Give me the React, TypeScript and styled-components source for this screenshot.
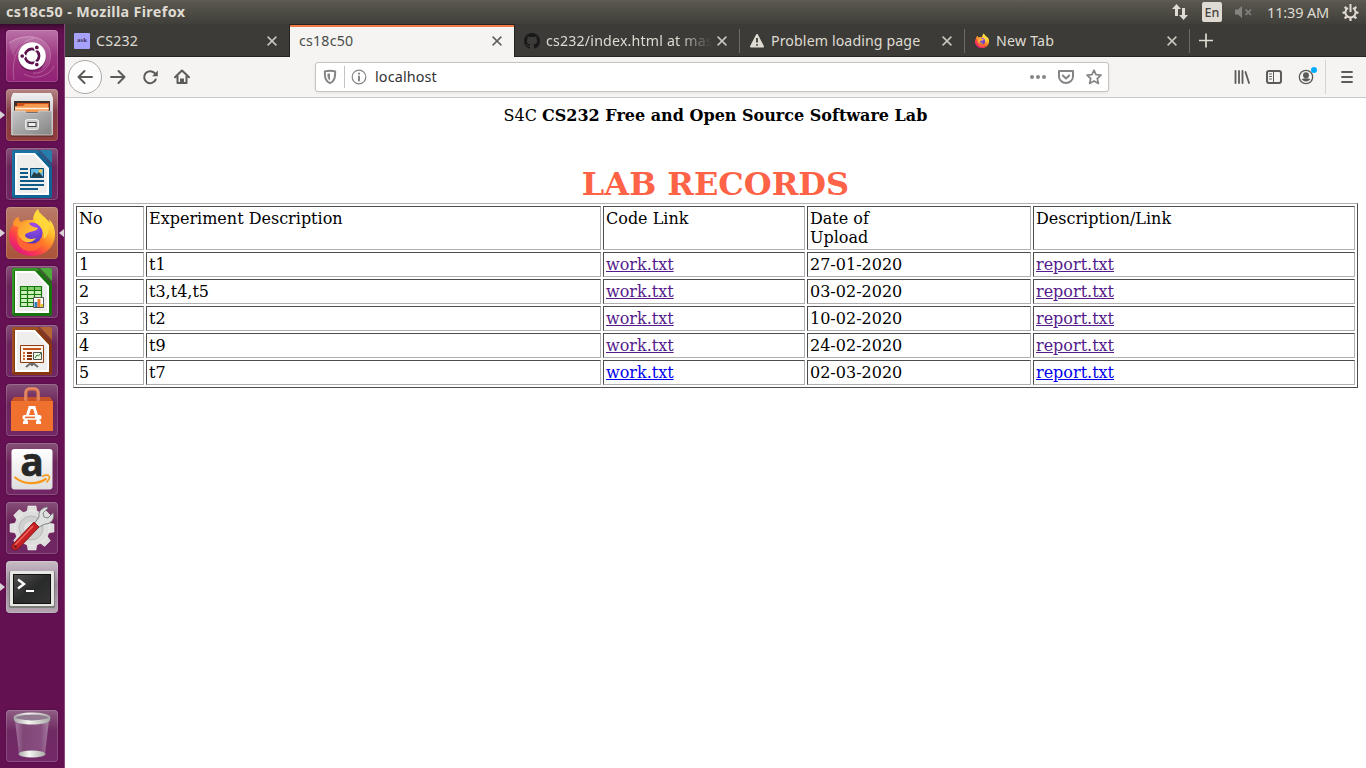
import React from "react";
import styled, { createGlobalStyle, css } from "styled-components";

const GlobalStyle = createGlobalStyle`
  html, body { margin: 0; padding: 0; background: #fff; overflow: hidden; }
  * { box-sizing: border-box; }
  svg { display: block; flex: none; overflow: visible; }
`;

const uiFont = `"Noto Sans", "Open Sans", sans-serif`;

const Desktop = styled.div`
  width: 1366px;
  height: 768px;
  display: flex;
  flex-direction: column;
  font-family: ${uiFont};
`;

const MenuBar = styled.header`
  height: 24px;
  flex: none;
  display: flex;
  align-items: center;
  justify-content: space-between;
  padding: 0 7px 0 6px;
  background: linear-gradient(#5f5d53 0, #57554c 3px, #403f3a 100%);
  color: #dfdbd2;
`;

const WindowTitle = styled.span`
  font-size: 14.3px;
  font-weight: 700;
  line-height: 24px;
  letter-spacing: 0.36px;
  white-space: nowrap;
`;

const Indicators = styled.div`
  display: flex;
  align-items: center;
`;

const Language = styled.span`
  width: 20px;
  height: 20px;
  margin-left: 13px;
  border-radius: 2px;
  background: #dfdbd2;
  color: #45443f;
  font-size: 12.5px;
  font-weight: 500;
  line-height: 21px;
  text-align: center;
`;

const VolumeSlot = styled.span`
  margin-left: 12px;
`;

const Clock = styled.span`
  width: 63px;
  margin: 0 12px 0 14px;
  font-size: 14.5px;
  line-height: 24px;
  letter-spacing: -0.15px;
  white-space: nowrap;
`;

const Workspace = styled.div`
  flex: 1;
  min-height: 0;
  display: flex;
`;

const Launcher = styled.nav`
  width: 65px;
  flex: none;
  display: flex;
  flex-direction: column;
  gap: 7px;
  padding: 6px 0 6px 6px;
  border-right: 1px solid #84487a;
  background: linear-gradient(#380a2e 0, #5d0d4b 6px, #651053 12px, #641152 100%);
`;

const Tile = styled.div<{ $fill: string; $last?: boolean }>`
  position: relative;
  width: 52px;
  height: 52px;
  flex: none;
  border-radius: 4px;
  background: ${(p) => p.$fill};
  box-shadow: inset 0 0 0 1px rgba(255, 255, 255, 0.17), 0 0 2px rgba(30, 0, 25, 0.45);
  ${(p) => p.$last && css`margin-top: auto;`}
`;

const Marker = styled.i<{ $right?: boolean }>`
  position: absolute;
  top: 22px;
  width: 0;
  height: 0;
  border: 4px solid transparent;
  ${(p) =>
    p.$right
      ? css`right: -6px; border-right: 5px solid #d9d3d8; border-left: 0;`
      : css`left: -6px; border-left: 5px solid #d9d3d8; border-right: 0;`}
`;

const Browser = styled.main`
  flex: 1;
  min-width: 0;
  display: flex;
  flex-direction: column;
  background: #fff;
`;

const TabStrip = styled.div`
  height: 33px;
  flex: none;
  display: flex;
  background: #3c3b37;
  box-shadow: inset 0 -1px #252420;
`;

const TabBox = styled.div<{ $active?: boolean; $divider?: boolean }>`
  position: relative;
  width: 225px;
  height: 33px;
  display: flex;
  align-items: center;
  padding: 1px 13px 0 9px;
  color: ${(p) => (p.$active ? "#4c4c4c" : "#dfdbd2")};
  ${(p) =>
    p.$active &&
    css`
      background: linear-gradient(#252420 0 1px, #f07746 1px 3px, #f5f4f2 3px);
      box-shadow: inset -1px 0 #252420, -1px 0 #252420;
    `}
  ${(p) =>
    p.$divider &&
    css`
      &::after {
        content: "";
        position: absolute;
        right: 0;
        top: 5px;
        width: 1px;
        height: 24px;
        background: #6b6a66;
      }
    `}
`;

const TabIcon = styled.span`
  width: 16px;
  height: 16px;
  margin-right: 6px;
  flex: none;
`;

const AskIcon = styled(TabIcon)`
  border-radius: 1px;
  background: #a6a2fa;
  color: #44335d;
  font: 700 7px/15px "Liberation Serif", serif;
  text-align: center;
`;

const TabTitle = styled.span<{ $spacing: number; $fade?: boolean }>`
  flex: 1;
  min-width: 0;
  overflow: hidden;
  font-size: 14.2px;
  line-height: 20px;
  letter-spacing: ${(p) => p.$spacing}px;
  white-space: nowrap;
  ${(p) => p.$fade && css`mask-image: linear-gradient(90deg, #000 132px, transparent 166px);`}
`;

const NewTab = styled.div`
  padding: 9px 0 0 9px;
`;

const Toolbar = styled.div`
  height: 41px;
  flex: none;
  display: flex;
  align-items: center;
  padding: 0 11px 0 3px;
  background: #f5f4f2;
  border-bottom: 1px solid #cbc9c7;
  color: #5b5b58;
`;

const BackButton = styled.span`
  width: 34px;
  height: 34px;
  display: grid;
  place-items: center;
  border: 1px solid #aaa9a7;
  border-radius: 50%;
  background: #fdfdfd;
`;

const NavIcons = styled.div`
  display: flex;
  gap: 16px;
  margin-left: 8px;
`;

const AddressBar = styled.div`
  width: 794px;
  height: 30px;
  margin-left: 125px;
  display: flex;
  align-items: center;
  padding: 0 6px;
  border: 1px solid #c5c2c0;
  border-radius: 3px;
  background: #fff;
  box-shadow: 0 1px 3px rgba(0, 0, 0, 0.07);
  color: #858583;
`;

const AddressDivider = styled.i`
  width: 1px;
  height: 22px;
  margin: 0 6px 0 6px;
  background: #c6c4c2;
`;

const Url = styled.span`
  flex: 1;
  padding-left: 8px;
  color: #333;
  font-size: 14.4px;
  line-height: 20px;
  letter-spacing: 0.12px;
`;

const AddressActions = styled.div`
  display: flex;
  gap: 12px;
`;

const ToolIcons = styled.div`
  display: flex;
  align-items: center;
  gap: 16px;
  margin-left: auto;
`;

const ToolDivider = styled.i`
  width: 1px;
  height: 34px;
  margin: 0 13px 0 7px;
  background: #d6d4d2;
`;

const Page = styled.article`
  flex: 1;
  padding: 8px;
  color: #000;
  font: 16px/19px "DejaVu Serif", serif;
`;

const CourseName = styled.p`
  margin: 0;
  text-align: center;
`;

const Heading = styled.h1`
  margin: 40px 0 0;
  color: tomato;
  font-size: 32px;
  line-height: 38px;
  text-align: center;
`;

const Records = styled.table`
  width: 1285px;
  table-layout: fixed;
  border: 1px solid;
  border-color: #b0b0b0 #4c4c4c #4c4c4c #b0b0b0;
  border-collapse: separate;
  border-spacing: 2px;
`;

const Col = styled.col<{ $w: number }>`
  width: ${(p) => p.$w}px;
`;

const Cell = styled.td`
  padding: 2px;
  vertical-align: top;
  border: 1px solid;
  border-color: #4c4c4c #b0b0b0 #b0b0b0 #4c4c4c;
`;

const FileLink = styled.a<{ $visited: boolean }>`
  color: ${(p) => (p.$visited ? "#551a8b" : "#0000ee")};
  text-decoration: underline;
`;

const Svg = ({ s = 16, children }: { s?: number; children: React.ReactNode }) => (
  <svg width={s} height={s} viewBox={`0 0 ${s} ${s}`} fill="none" stroke="currentColor" strokeWidth="2" strokeLinecap="round" strokeLinejoin="round">
    {children}
  </svg>
);

const CloseIcon = () => (
  <svg width="10" height="10" viewBox="0 0 10 10" stroke="currentColor" strokeWidth="1.5" opacity=".88">
    <path d="M.6.6l8.8 8.8M9.4.6L.6 9.4" />
  </svg>
);

const FirefoxLogo = ({ size }: { size: number }) => (
  <svg width={size} height={size} viewBox="0 0 52 52">
    <defs>
      <linearGradient id="fxBody" x1=".85" y1=".1" x2=".25" y2=".95">
        <stop offset="0" stopColor="#fff04a" />
        <stop offset=".3" stopColor="#ffbd2f" />
        <stop offset=".55" stopColor="#ff7a2a" />
        <stop offset=".78" stopColor="#fc3a4e" />
        <stop offset="1" stopColor="#e21a7c" />
      </linearGradient>
      <radialGradient id="fxGlobe" cx=".6" cy=".15" r=".95">
        <stop offset="0" stopColor="#a04cf0" />
        <stop offset=".55" stopColor="#7140d2" />
        <stop offset="1" stopColor="#4a36ac" />
      </radialGradient>
      <linearGradient id="fxTail" x1="0" y1="0" x2="1" y2=".6">
        <stop offset="0" stopColor="#ff8a2b" />
        <stop offset="1" stopColor="#ffc93a" />
      </linearGradient>
    </defs>
    <path fill="url(#fxBody)" d="M32 2c-3 3-5 7-5 11-5 0-9 0-12 2-2-1-3-3-2-5-4 2-6 6-6 8-3 3-4 8-4 12 1 11 11 19 23 19 14 0 23-10 23-22 0-7-3-12-6-15l1 4C41 11 33 9 32 2z" />
    <circle cx="26" cy="26" r="10.500" fill="url(#fxGlobe)" />
    <path fill="#ffd83c" d="M32 2c-5 5-6 10-1 15 7 5 8 11 5 17 7-5 9-14 5-21C38 8 33 7 32 2z" opacity=".85" />
    <path fill="url(#fxTail)" d="M7 18c0-4 2-7 6-8-1 3 0 4 2 6 3-1 6-1 8-1 0 3 3 5 9 6-1 3-5 3-8 4-2 1-5 1-5 4 2 3 6 4 11 2-3 5-11 6-15 1-4-4-4-8-2-12z" />
    <path fill="#ff7528" d="M12 22c-1 10 6 16 15 15 5 0 9-3 11-8 1 9-6 15-14 15C14 44 8 34 12 22z" opacity=".75" />
  </svg>
);

const UbuntuIcon = () => (
  <svg width="52" height="52" viewBox="0 0 52 52">
    <g fill="none" stroke="#fff" opacity=".25">
      <path d="M3 13C15 5 35 3 43 18c5 12-3 27-16 25" />
      <path d="M8 50C5 31 11 12 28 8" />
      <path d="M18 44c12 7 26 1 30-8" />
    </g>
    <path d="M3 12C18 2 40 4 44 22c1 9-3 15-8 18 4-14 0-26-12-28-8-1-15 4-16 15C5 22 4 16 3 12z" fill="#fff" opacity=".13" />
    <circle cx="26" cy="27.500" r="14" fill="#4b0b3c" opacity=".45" />
    <circle cx="26" cy="26" r="13.800" fill="#fff" />
    <circle cx="26" cy="26" r="7" fill="none" stroke="#5e114e" strokeWidth="2.800" />
    <g stroke="#fff" strokeWidth="1.300">
      <path d="M26 26l4.600-8M26 26l4.600 8M26 26h-9" />
      <circle cx="16.200" cy="26" r="2.500" fill="#5e114e" />
      <circle cx="30.800" cy="17.400" r="2.500" fill="#5e114e" />
      <circle cx="30.800" cy="34.600" r="2.500" fill="#5e114e" />
    </g>
    <circle cx="26" cy="26" r="5.400" fill="#fff" />
  </svg>
);

const FilesIcon = () => (
  <svg width="52" height="52" viewBox="0 0 52 52">
    <defs>
      <linearGradient id="drawer" x2="1" y2="1"><stop stopColor="#c6c6c6" /><stop offset="1" stopColor="#838383" /></linearGradient>
      <linearGradient id="cabinet" x2="0" y2="1"><stop stopColor="#f0f0f0" /><stop offset="1" stopColor="#a5a5a5" /></linearGradient>
    </defs>
    <path d="M5 45h42v3H5z" fill="#37251f" opacity=".45" />
    <path d="M7 4h38l2 5v37H5V9z" fill="url(#cabinet)" />
    <path d="M8 12h36v13H8z" fill="#3e302c" />
    <path d="M11 14h32v9H11z" fill="#d35219" />
    <path d="M9 17h8l2-2h23v8H9z" fill="#f49a50" />
    <path d="M9 19.500h34" stroke="#fff0dc" strokeWidth="1.500" />
    <path d="M6 22h13l1 2h12l1-2h13v24H6z" fill="url(#drawer)" stroke="#ddd" strokeWidth=".7" />
    <rect x="19.500" y="30.500" width="13" height="10" rx="2" fill="#ccc" stroke="#eee" />
    <rect x="22" y="33.500" width="8" height="4" fill="#eee" stroke="#444" />
  </svg>
);

const OfficeDocument = ({ dark, light, children }: { dark: string; light: string; children: React.ReactNode }) => (
  <svg width="52" height="52" viewBox="0 0 52 52">
    <path d="M8 2h23l15 17v29q0 2-2 2H8q-2 0-2-2V4q0-2 2-2z" fill={dark} />
    <path d="M8 2h23l3 3H8v42l-2 1V4q0-2 2-2z" fill={light} opacity=".55" />
    <path d="M31 2h13q2 0 2 2v15z" fill={dark} opacity=".65" />
    <path d="M34 2h10q2 0 2 2v11z" fill={light} />
    <path d="M9 5h20l14 15v27H9z" fill="#fff" />
    <path d="M11 7h17l13 14v24H11z" fill="#eeeeed" />
    {children}
  </svg>
);

const WriterIcon = () => (
  <OfficeDocument dark="#0e6493" light="#277eab">
    <path d="M14 21h8M14 25h8M14 29h8M14 33h24M14 37h24M14 41h18" stroke="#115986" strokeWidth="2" />
    <path d="M24.500 20.500h13v9h-13z" fill="#67b9e4" stroke="#0b4970" />
    <path d="M25 29l3-5 3 2 2-2 4 5z" fill="#253d44" />
    <circle cx="34.500" cy="23" r="1.800" fill="#f3c73d" />
  </OfficeDocument>
);

const CalcIcon = () => (
  <OfficeDocument dark="#18750d" light="#4cab3b">
    <path d="M14 20h22v21H14z" fill="#cdf2bb" />
    <path d="M14 20h22v5H14z" fill="#86cf70" />
    <path d="M14.500 20.500h21v20h-21zM14 24.500h22M14 28.500h22M14 32.500h22M14 36.500h22M21.500 20v21M28.500 20v21" fill="none" stroke="#19760d" strokeWidth="1.200" />
    <path d="M27.500 31.500h10v10h-10z" fill="#fff" stroke="#555" />
    <path d="M28.500 36h3v5h-3z" fill="#297fbd" /><path d="M31.500 33h3v8h-3z" fill="#ed7b26" /><path d="M34.500 38h2.500v3h-2.500z" fill="#e8c62c" />
  </OfficeDocument>
);

const ImpressIcon = () => (
  <OfficeDocument dark="#86370e" light="#b56634">
    <path d="M14.500 20.500h23v17h-23z" fill="#fff7ef" stroke="#913b11" />
    <path d="M17 24h18" stroke="#c7541b" strokeWidth="2" />
    <path d="M17 28h2M17 31h2M17 34h2" stroke="#d4692f" strokeWidth="2" />
    <path d="M21 28h5M21 31h5M21 34h5" stroke="#83340d" strokeWidth="2" />
    <path d="M27.500 27.500h8v7h-8z" fill="#eef7e6" stroke="#50554d" />
    <path d="M29 33l2-3 1.500 1L35 28" fill="none" stroke="#30832e" />
    <path d="M26 38v3M25 38l-5 4M27 38l5 4" stroke="#6b6b6b" strokeWidth="2" />
  </OfficeDocument>
);

const SoftwareIcon = () => (
  <svg width="52" height="52" viewBox="0 0 52 52">
    <path d="M7 14h38l2 33H5z" fill="#eb692d" />
    <path d="M8 13h36l3 5H5z" fill="#c65427" />
    <path d="M5 17h42v30H5z" fill="#f0712e" />
    <path d="M20 17V9q0-4 4-4h4q4 0 4 4v8" fill="none" stroke="#df7b50" strokeWidth="3" />
    <path d="M19 16V9q0-5 5-5h4q5 0 5 5v7" fill="none" stroke="#f2a37b" strokeWidth=".8" />
    <path d="M24 23l-5 16M28 23l5 16M22.500 23.500h7M17 38.500h5M30 38.500h5" stroke="#fff" strokeWidth="2.800" fill="none" />
    <rect x="16.500" y="31" width="19" height="4.800" rx="2" fill="#fff" />
    <path d="M19 33.400h10" stroke="#ec692c" strokeWidth="1.600" />
  </svg>
);

const AmazonIcon = () => (
  <svg width="52" height="52" viewBox="0 0 52 52">
    <defs><linearGradient id="paper" x2="0" y2="1"><stop stopColor="#fff" /><stop offset="1" stopColor="#dedede" /></linearGradient></defs>
    <rect x="5.500" y="6" width="41" height="40.500" rx="3" fill="url(#paper)" />
    <text x="26" y="33" textAnchor="middle" fontFamily="Open Sans, sans-serif" fontSize="39" fontWeight="700" fill="#272727" stroke="#272727" strokeWidth=".6">a</text>
    <path d="M8.500 34c9 8 23 8 32 1.500" fill="none" stroke="#f69a1d" strokeWidth="2.200" />
    <path d="M36 33.500c3-1.500 6-1.500 7-.5s-.3 4-2.500 6.500" fill="none" stroke="#f69a1d" strokeWidth="1.600" />
  </svg>
);

const SettingsIcon = () => (
  <svg width="52" height="52" viewBox="0 0 52 52">
    <g fill="#dededd" stroke="#fafafa" strokeWidth=".5">
      {[0, 45, 90, 135, 180, 225, 270, 315].map((a) => (
        <path key={a} d="M21 10l1-6h8l1 6z" transform={`rotate(${a} 26 26)`} />
      ))}
      <circle cx="26" cy="26" r="17.500" />
    </g>
    <circle cx="25" cy="26" r="12" fill="#d0d0d0" stroke="#b8b8b8" />
    <circle cx="24" cy="26" r="6" fill="#e1e1e1" />
    <path d="M31 26l-3-4 5-7c-1-6 3-9 8-10l1 1-5 5 1 4 4 1 5-5c2 6-2 11-8 11z" fill="#dedfdf" stroke="#818383" />
    <path d="M28 20l5 5-21 22c-5 3-8-2-5-5z" fill="#c82024" stroke="#871918" />
    <path d="M27 24L9 43" stroke="#ef6860" strokeWidth="1.500" />
    <circle cx="9.500" cy="44.500" r="1.500" fill="#762020" />
  </svg>
);

const TerminalIcon = () => (
  <svg width="52" height="52" viewBox="0 0 52 52">
    <defs><linearGradient id="screen" x2="1" y2="1"><stop stopColor="#50514f" /><stop offset=".5" stopColor="#292a2a" /><stop offset="1" stopColor="#343534" /></linearGradient></defs>
    <rect x="3" y="10" width="46" height="37" rx="1.500" fill="#7c7c7a" />
    <rect x="4" y="10" width="44" height="35" rx="1" fill="#e7e7e4" />
    <path d="M7 13h38v30H7z" fill="#111" />
    <path d="M8 14h36v28H8z" fill="url(#screen)" />
    <path d="M12 18.500l6 4.500-6 4.500" fill="none" stroke="#fff" strokeWidth="2.400" /><path d="M20 30h8" stroke="#fff" strokeWidth="2" />
  </svg>
);

const TrashIcon = () => (
  <svg width="52" height="52" viewBox="0 0 52 52">
    <defs>
      <linearGradient id="glass"><stop stopColor="#b48bb0" /><stop offset=".25" stopColor="#84507c" /><stop offset=".75" stopColor="#8e5a87" /><stop offset="1" stopColor="#b795b5" /></linearGradient>
      <linearGradient id="rim"><stop stopColor="#aaa" /><stop offset=".4" stopColor="#f5f5f3" /><stop offset="1" stopColor="#a9aaa7" /></linearGradient>
    </defs>
    <path d="M9 10l4 34q13 5 26 0l4-34z" fill="url(#glass)" opacity=".75" />
    <ellipse cx="26" cy="44" rx="13.500" ry="3.500" fill="url(#rim)" />
    <ellipse cx="26" cy="7.500" rx="17.500" ry="4" fill="#927b90" stroke="url(#rim)" strokeWidth="2" />
    <path d="M8 8v2c1 6 35 6 36 0V8c-3 5-33 5-36 0z" fill="url(#rim)" />
  </svg>
);

const purpleTile = "linear-gradient(#865078, #6c245b 38%, #702764)";
const apps = [
  { name: "dash", icon: <UbuntuIcon />, fill: "linear-gradient(#bb72a8, #9c357f 50%, #922176)" },
  { name: "files", icon: <FilesIcon />, fill: "linear-gradient(#b68683, #823a46 45%, #933c3c)", left: true },
  { name: "writer", icon: <WriterIcon />, fill: purpleTile },
  { name: "firefox", icon: <FirefoxLogo size={52} />, fill: "linear-gradient(#b97b68, #aa5238)", left: true, right: true },
  { name: "calc", icon: <CalcIcon />, fill: purpleTile },
  { name: "impress", icon: <ImpressIcon />, fill: purpleTile },
  { name: "software", icon: <SoftwareIcon />, fill: purpleTile },
  { name: "amazon", icon: <AmazonIcon />, fill: purpleTile },
  { name: "settings", icon: <SettingsIcon />, fill: purpleTile },
  { name: "terminal", icon: <TerminalIcon />, fill: "linear-gradient(#c9bdc7, #9b8798 45%, #b4a5b0)", left: true },
  { name: "trash", icon: <TrashIcon />, fill: "linear-gradient(#8f5e84, #6f2a62 40%, #74296a)", last: true },
];

const githubMark = "M8 0C3.58 0 0 3.58 0 8c0 3.54 2.29 6.53 5.47 7.59.4.07.55-.17.55-.38 0-.19-.01-.82-.01-1.49-2.01.37-2.53-.49-2.69-.94-.09-.23-.48-.94-.82-1.13-.28-.15-.68-.52-.01-.53.63-.01 1.08.58 1.23.82.72 1.21 1.87.87 2.33.66.07-.52.28-.87.51-1.07-1.78-.2-3.64-.89-3.64-3.95 0-.87.31-1.59.82-2.15-.08-.2-.36-1.02.08-2.12 0 0 .67-.21 2.2.82a7.65 7.65 0 0 1 4 0c1.53-1.04 2.2-.82 2.2-.82.44 1.1.16 1.92.08 2.12.51.56.82 1.27.82 2.15 0 3.07-1.87 3.75-3.65 3.95.29.25.54.73.54 1.48 0 1.07-.01 1.93-.01 2.2 0 .21.15.46.55.38A8.01 8.01 0 0 0 16 8c0-4.42-3.58-8-8-8z";

const tabs = [
  { title: "CS232", spacing: 0.2, icon: <AskIcon>ask</AskIcon> },
  { title: "cs18c50", spacing: 0.2, active: true },
  { title: "cs232/index.html at master", spacing: 0.18, fade: true, divider: true, icon: <TabIcon><svg width="16" height="16" viewBox="0 0 16 16"><path fill="#191919" d={githubMark} /></svg></TabIcon> },
  { title: "Problem loading page", spacing: 0.1, divider: true, icon: <TabIcon><svg width="16" height="16" viewBox="0 0 16 16"><path d="M8 2l6 11.500H2z" fill="#dfdbd2" stroke="#dfdbd2" strokeWidth="2" strokeLinejoin="round" /><path d="M8 5v4.500M8 11.200v1.600" stroke="#3c3b37" strokeWidth="1.800" /></svg></TabIcon> },
  { title: "New Tab", spacing: 0.2, divider: true, icon: <TabIcon><FirefoxLogo size={16} /></TabIcon> },
];

const records = [
  ["1", "t1", "27-01-2020"],
  ["2", "t3,t4,t5", "03-02-2020"],
  ["3", "t2", "10-02-2020"],
  ["4", "t9", "24-02-2020"],
  ["5", "t7", "02-03-2020"],
];

export default function App() {
  return (
    <Desktop>
      <GlobalStyle />
      <MenuBar>
        <WindowTitle>cs18c50 - Mozilla Firefox</WindowTitle>
        <Indicators>
          <svg width="18" height="18" viewBox="0 0 18 18" fill="#dfdbd2">
            <path d="M5.500 1L10 6H7v7H4V6H1zM12.500 17L8 12h3V5h3v7h3z" />
          </svg>
          <Language>En</Language>
          <VolumeSlot>
            <svg width="19" height="14" viewBox="0 0 19 14">
              <path d="M1 4.500h3L8 1v12L4 9.500H1z" fill="#85837d" />
              <path d="M11.500 4.500l5.500 5.500M17 4.500L11.500 10" stroke="#85837d" strokeWidth="1.600" />
            </svg>
          </VolumeSlot>
          <Clock>11:39 AM</Clock>
          <svg width="17" height="17" viewBox="0 0 17 17" fill="none" stroke="#dfdbd2">
            <path d="M6 4a5.100 5.100 0 1 0 5 0" strokeWidth="2" />
            <path d="M8.500 0v8" strokeWidth="2" />
            <path d="M3.400 8.700H.5M16.500 8.700h-2.900M4.800 5L2.700 2.900M12.200 5l2.100-2.100M4.800 12.400l-2.100 2.100M12.200 12.400l2.100 2.100M8.500 14v3" strokeWidth="2.200" />
          </svg>
        </Indicators>
      </MenuBar>
      <Workspace>
        <Launcher>
          {apps.map((a) => (
            <Tile key={a.name} $fill={a.fill} $last={a.last}>
              {a.icon}
              {a.left && <Marker />}
              {a.right && <Marker $right />}
            </Tile>
          ))}
        </Launcher>
        <Browser>
          <TabStrip>
            {tabs.map((t) => (
              <TabBox key={t.title} $active={t.active} $divider={t.divider}>
                {t.icon}
                <TabTitle $spacing={t.spacing} $fade={t.fade}>{t.title}</TabTitle>
                <CloseIcon />
              </TabBox>
            ))}
            <NewTab>
              <svg width="15" height="15" viewBox="0 0 15 15" stroke="#dfdbd2" strokeWidth="1.700"><path d="M7 .5v14M0 7.500h14" /></svg>
            </NewTab>
          </TabStrip>
          <Toolbar>
            <BackButton><Svg><path d="M15 8H1.500M7.500 2l-6 6 6 6" /></Svg></BackButton>
            <NavIcons>
              <Svg><path d="M1 8h13.500M8.500 2l6 6-6 6" /></Svg>
              <Svg><path d="M13.700 10.500A6 6 0 1 1 12.500 4l1.600 1.700" /><path d="M15.800 1.500v5.700h-5.700z" fill="currentColor" stroke="none" /></Svg>
              <Svg><path d="M1 8.300L8 1.500l7 6.800M3.500 7.500V14h9V7.500" /><path d="M6 14V9.500h4V14z" fill="currentColor" stroke="none" /></Svg>
            </NavIcons>
            <AddressBar>
              <Svg><path d="M8 1.800c2 0 3.800.2 5.200.6 0 5.600-.4 9.700-5.200 11.800C3.200 12.100 2.800 8 2.800 2.400 4.200 2 6 1.800 8 1.800z" /><path d="M8 4.500v7C6 10.200 5.400 8.300 5.400 4.700z" fill="currentColor" stroke="none" /></Svg>
              <AddressDivider />
              <Svg><circle cx="8" cy="8" r="6.800" strokeWidth="1.200" /><path d="M8 7.500v4" /><path d="M8 4.600v.1" /></Svg>
              <Url>localhost</Url>
              <AddressActions>
                <Svg><g fill="currentColor" stroke="none"><circle cx="2" cy="8" r="2" /><circle cx="8" cy="8" r="2" /><circle cx="14" cy="8" r="2" /></g></Svg>
                <Svg><path d="M1 2h14v5.500a7 6.500 0 0 1-14 0z" /><path d="M4.800 6.500L8 9.500l3.200-3" /></Svg>
                <Svg><path d="M8 1.200l2 4.500 5 .5-3.700 3.300 1.100 4.900L8 11.900l-4.400 2.500 1.100-4.900L1 6.200l5-.5z" strokeWidth="1.700" /></Svg>
              </AddressActions>
            </AddressBar>
            <ToolIcons>
              <Svg><path d="M1.500 2v12M5 2v12M8.500 2v12M11.500 3L15 14" strokeWidth="1.800" /></Svg>
              <Svg><rect x="1" y="2" width="14" height="12" rx="2" /><path d="M7.500 2v12" strokeWidth="1" /><path d="M3.500 5h2M3.500 7.500h2M3.500 10h2" strokeWidth="1" /></Svg>
              <svg width="20" height="20" viewBox="0 0 20 20">
                <circle cx="8" cy="10" r="6.700" fill="none" stroke="#5b5b58" strokeWidth="1.300" />
                <circle cx="8" cy="8.200" r="3" fill="#5b5b58" /><path d="M3.500 12q4.500-1.500 9 0-4.500 5-9 0z" fill="#5b5b58" />
                <circle cx="16" cy="3" r="3" fill="#00adff" />
              </svg>
            </ToolIcons>
            <ToolDivider />
            <Svg><path d="M3 3h10M3 8h10M3 13h10" strokeWidth="1.800" /></Svg>
          </Toolbar>
          <Page>
            <CourseName>S4C <b>CS232 Free and Open Source Software Lab</b></CourseName>
            <Heading>LAB RECORDS</Heading>
            <Records>
              <colgroup>{[68, 455, 202, 224, 322].map((w) => <Col key={w} $w={w} />)}</colgroup>
              <tbody>
                <tr>
                  <Cell>No</Cell><Cell>Experiment Description</Cell><Cell>Code Link</Cell>
                  <Cell>Date of<br />Upload</Cell><Cell>Description/Link</Cell>
                </tr>
                {records.map(([no, description, date], i) => (
                  <tr key={no}>
                    <Cell>{no}</Cell><Cell>{description}</Cell>
                    <Cell><FileLink $visited={i < 4} href="#">work.txt</FileLink></Cell>
                    <Cell>{date}</Cell>
                    <Cell><FileLink $visited={i < 4} href="#">report.txt</FileLink></Cell>
                  </tr>
                ))}
              </tbody>
            </Records>
          </Page>
        </Browser>
      </Workspace>
    </Desktop>
  );
}
